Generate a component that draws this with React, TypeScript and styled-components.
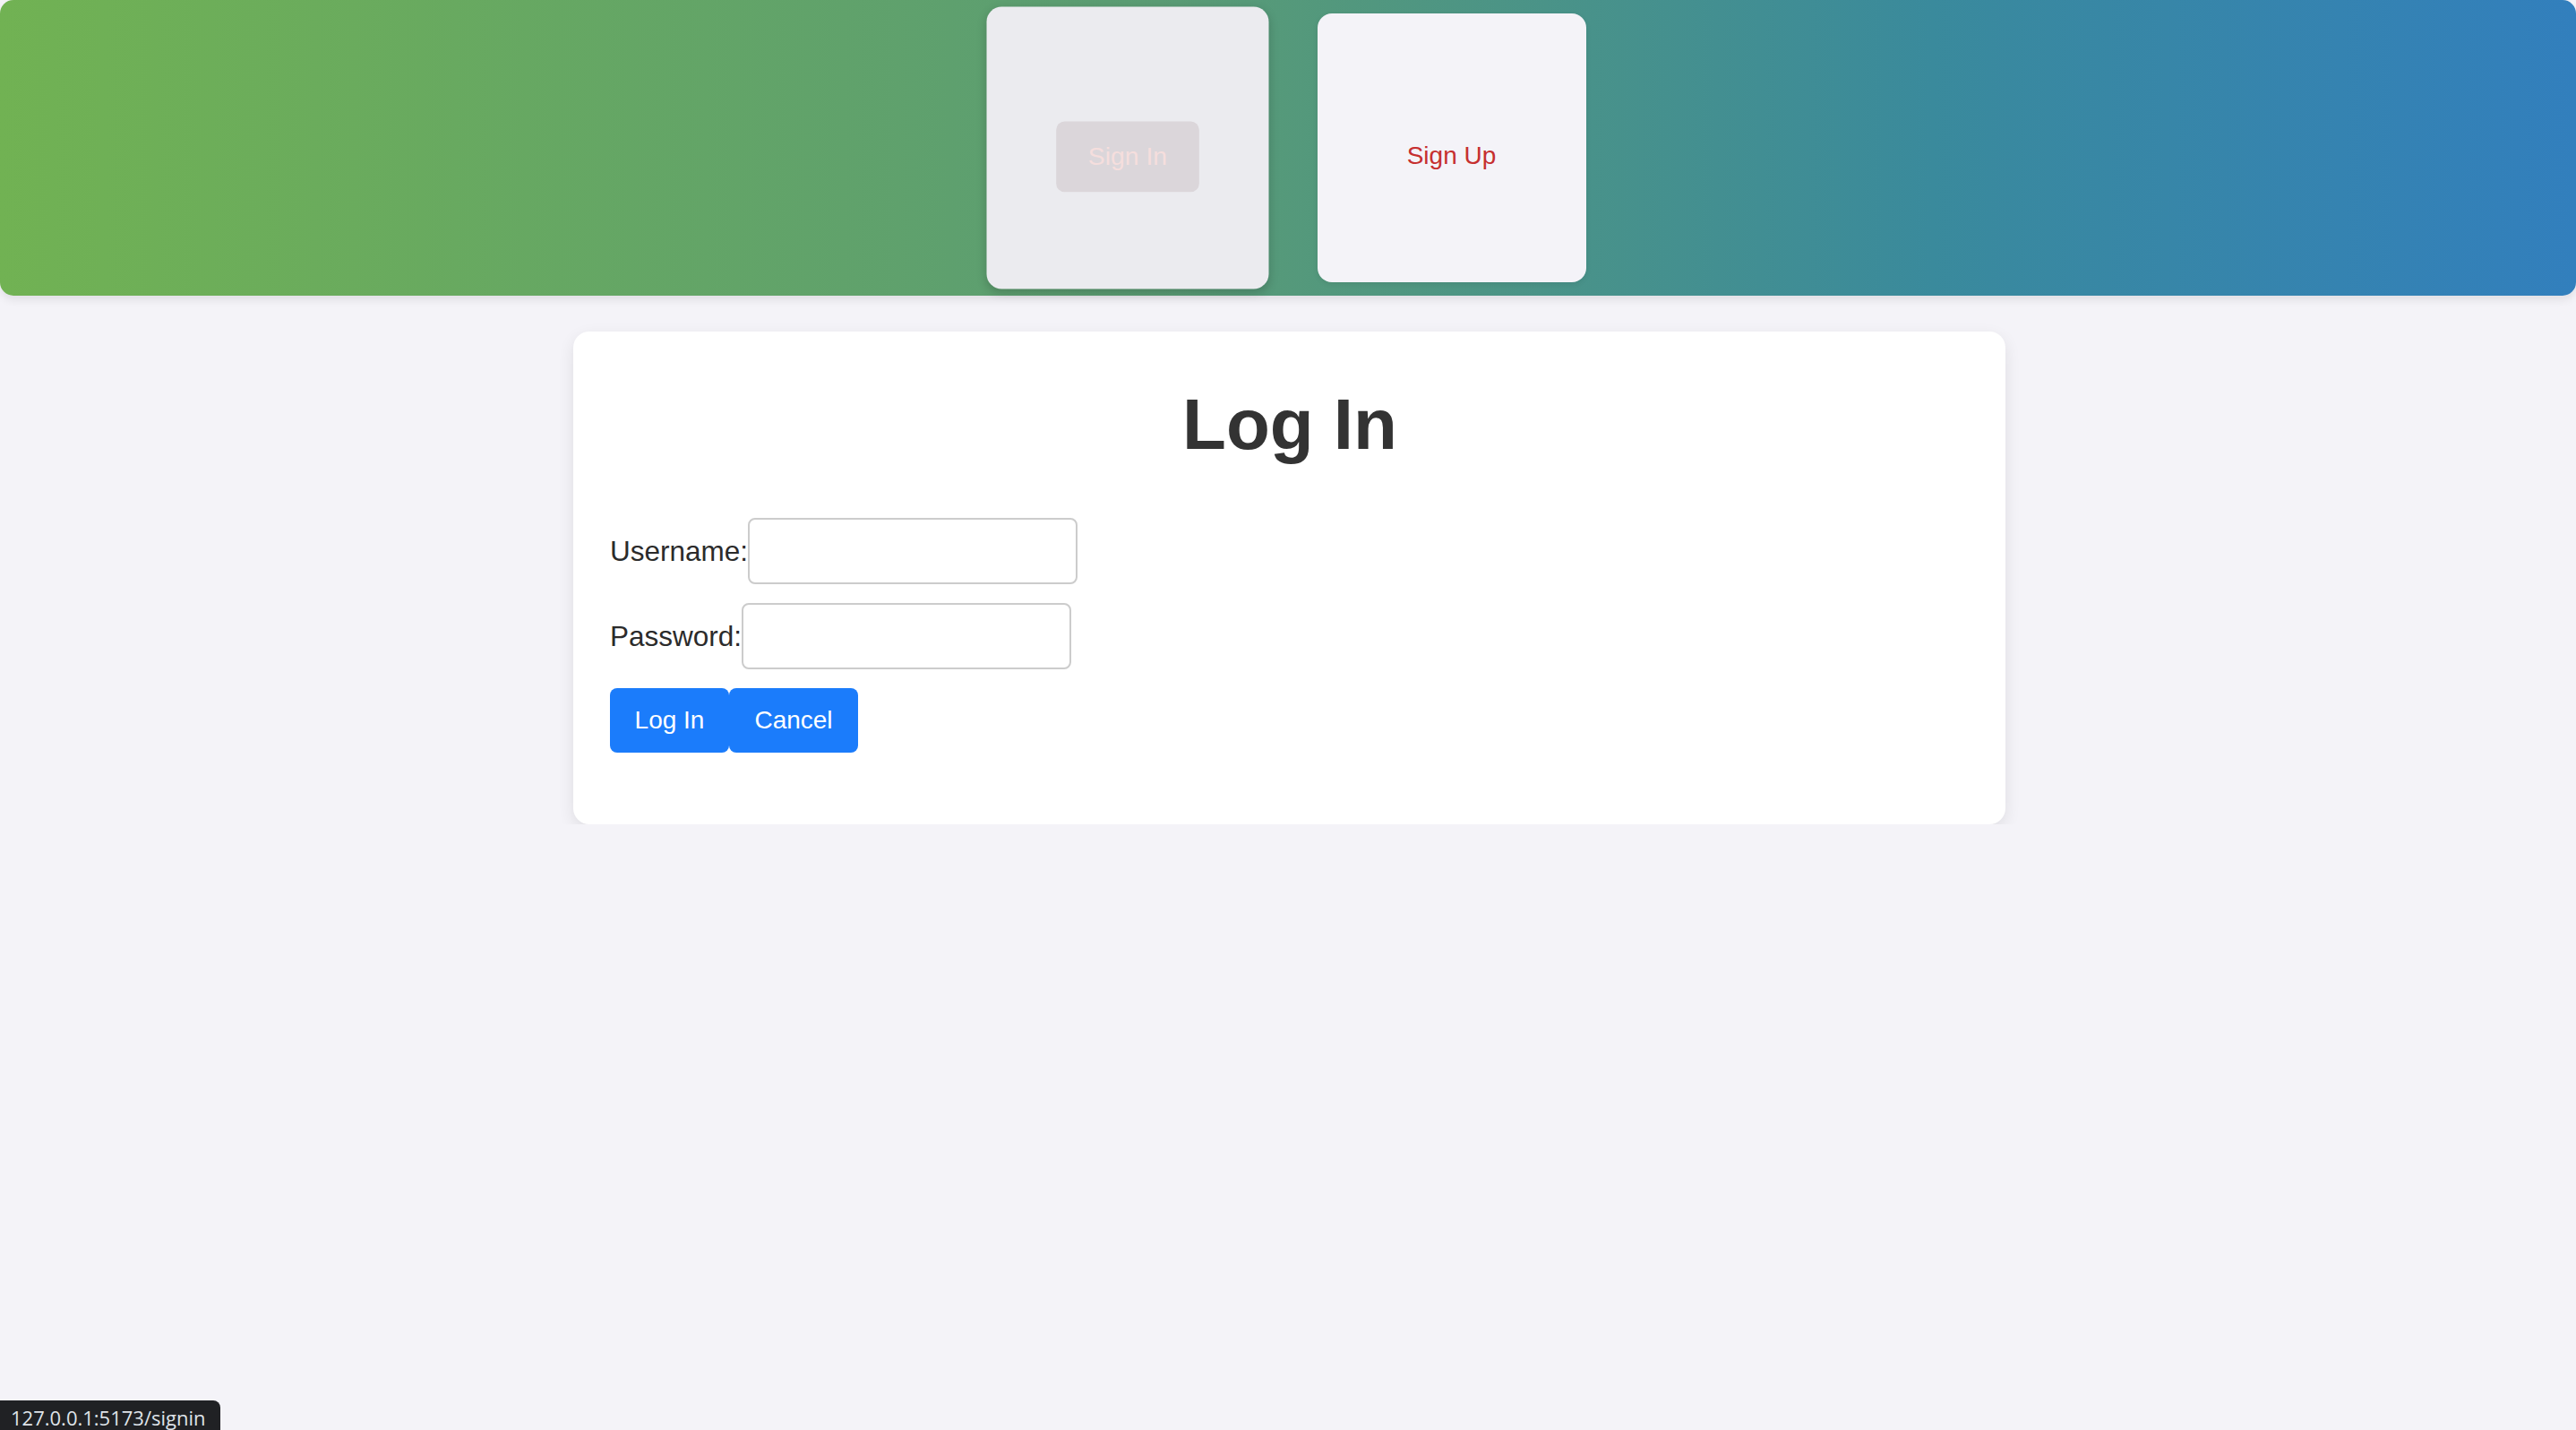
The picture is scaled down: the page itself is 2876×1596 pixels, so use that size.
import React from "react";
import styled, { createGlobalStyle } from "styled-components";

const GlobalStyle = createGlobalStyle`
  html, body {
    margin: 0;
    padding: 0;
    background: #f4f3f8;
    font-family: "Liberation Sans", Arial, sans-serif;
    min-height: 100%;
  }
  * { box-sizing: border-box; }
`;

const Header = styled.header`
  display: flex;
  justify-content: center;
  align-items: center;
  gap: 62px;
  height: 330px;
  padding-left: 3px;
  border-radius: 15px;
  background: linear-gradient(to right, #71b253, #5a9c74 45%, #3a8a9c 75%, #327fbd);
  box-shadow: 0 5px 10px rgba(0, 0, 0, 0.08);
`;

const NavCard = styled.div<{ $active?: boolean }>`
  width: 300px;
  height: 300px;
  border-radius: 16px;
  padding-top: 18px;
  display: flex;
  align-items: center;
  justify-content: center;
  background: ${(p) => (p.$active ? "#ebebef" : "#f4f3f8")};
  transform: ${(p) => (p.$active ? "scale(1.05)" : "none")};
  box-shadow: ${(p) =>
    p.$active ? "0 4px 10px rgba(0, 0, 0, 0.18)" : "0 2px 6px rgba(0, 0, 0, 0.08)"};
`;

const NavButton = styled.button`
  width: 152px;
  height: 75px;
  border: none;
  border-radius: 9px;
  background: #dbd6da;
  color: #f5dedd;
  font-family: "Liberation Sans", Arial, sans-serif;
  font-size: 27px;
  cursor: pointer;
`;

const NavLink = styled.span`
  color: #c62f2f;
  font-size: 28px;
  font-family: "Liberation Sans", Arial, sans-serif;
`;

const Main = styled.main`
  display: flex;
  justify-content: center;
  padding: 40px 0 0 3px;
`;

const FormCard = styled.section`
  width: 1599px;
  background: #ffffff;
  border-radius: 18px;
  padding: 40px 40px 80px 41px;
  box-shadow: 0 6px 18px rgba(0, 0, 0, 0.09);
`;

const Title = styled.h1`
  margin: 18px 0 58px;
  text-align: center;
  font-size: 80px;
  font-weight: 700;
  color: #333333;
  line-height: 92px;
`;

const Form = styled.form`
  display: flex;
  flex-direction: column;
  gap: 21px;
`;

const Row = styled.div`
  display: flex;
  align-items: center;
`;

const Label = styled.label`
  font-size: 31.5px;
  color: #2b2b2b;
`;

const Input = styled.input`
  width: 368px;
  height: 74px;
  border: 2px solid #cccccc;
  border-radius: 8px;
  background: #fff;
  font-size: 28px;
  padding: 0 14px;
  outline: none;
`;

const Actions = styled.div`
  display: flex;
`;

const Button = styled.button<{ $w: number }>`
  width: ${(p) => p.$w}px;
  height: 72px;
  border: none;
  border-radius: 8px;
  background: #1b7cfb;
  color: #ffffff;
  font-size: 28px;
  font-family: "Liberation Sans", Arial, sans-serif;
  cursor: pointer;
`;

const StatusBubble = styled.div`
  position: fixed;
  left: 0;
  bottom: 0;
  height: 33px;
  padding: 0 16px 0 12px;
  background: #202124;
  color: #dfe3e8;
  border-top-right-radius: 8px;
  font-family: "Open Sans", "Noto Sans", sans-serif;
  font-size: 22px;
  line-height: 38px;
  overflow: hidden;
`;

export default function App() {
  return (
    <>
      <GlobalStyle />
      <Header>
        <NavCard $active>
          <NavButton>Sign In</NavButton>
        </NavCard>
        <NavCard>
          <NavLink>Sign Up</NavLink>
        </NavCard>
      </Header>
      <Main>
        <FormCard>
          <Title>Log In</Title>
          <Form onSubmit={(e) => e.preventDefault()}>
            <Row>
              <Label htmlFor="username">Username:</Label>
              <Input id="username" type="text" />
            </Row>
            <Row>
              <Label htmlFor="password">Password:</Label>
              <Input id="password" type="password" />
            </Row>
            <Actions>
              <Button type="submit" $w={133}>Log In</Button>
              <Button type="button" $w={144}>Cancel</Button>
            </Actions>
          </Form>
        </FormCard>
      </Main>
      <StatusBubble>127.0.0.1:5173/signin</StatusBubble>
    </>
  );
}
